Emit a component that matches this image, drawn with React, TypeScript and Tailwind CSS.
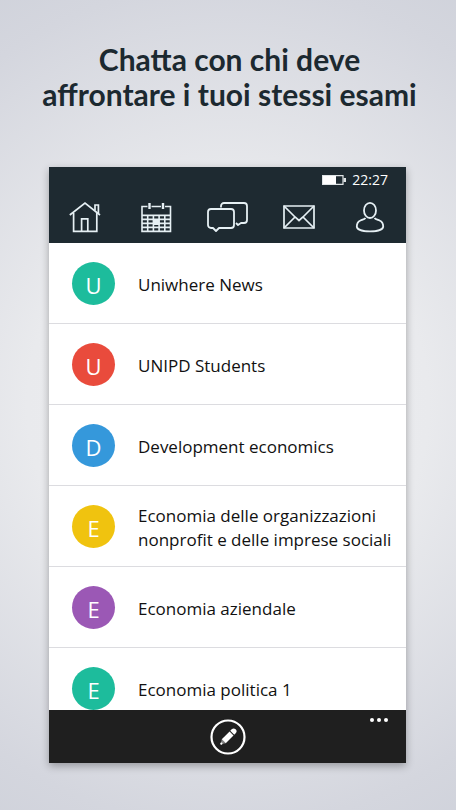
import type { ReactNode } from 'react'

const chats = [
  { name: 'Uniwhere News', color: 'bg-[#1dbc9c]' },
  { name: 'UNIPD Students', color: 'bg-[#e94b3c]' },
  { name: 'Development economics', color: 'bg-[#3598db]' },
  { name: 'Economia delle organizzazioni nonprofit e delle imprese sociali', color: 'bg-[#f0c30f]' },
  { name: 'Economia aziendale', color: 'bg-[#9b58b5]' },
  { name: 'Economia politica 1', color: 'bg-[#1dbc9c]' },
]

function HomeIcon() {
  return (
    <svg width="32" height="32" viewBox="0 0 32 32" fill="none" stroke="currentColor" strokeWidth="1.7">
      <path d="M.8 14 16 2.2 31 14" />
      <path d="M4.6 12v18.3h23.2V12" />
      <path d="M12.6 30V17.8h6.2V30" />
      <path d="M26 9.5V4h3.4v8" />
    </svg>
  )
}

function CalendarIcon() {
  return (
    <svg width="32" height="32" viewBox="0 0 32 32" fill="none" stroke="currentColor" strokeWidth="1.6">
      <path d="M7.5 5.5H2v24.9h28.5V5.5H25M11.5 5.5H21" />
      <path d="M2 14.4h28.5M2 18.4h28.5M2 22.4h28.5M2 26.4h28.5" />
      <path d="M7.7 14.4v16M13.4 14.4v16M19.1 14.4v16M24.8 14.4v16" />
      <path d="M9.5 2v6M23 2v6" strokeWidth="2.4" />
      <path d="M13 18h6.5v6H13z" fill="currentColor" stroke="none" />
    </svg>
  )
}

function ChatIcon() {
  return (
    <svg width="42" height="32" viewBox="0 0 42 32" fill="none" stroke="currentColor" strokeWidth="1.8" strokeLinejoin="round">
      <path d="M5 8h20a3 3 0 0 1 3 3v13a3 3 0 0 1-3 3H13l-3 3-3-3H5a3 3 0 0 1-3-3V11a3 3 0 0 1 3-3z" />
      <path d="M15 6.500V5a3 3 0 0 1 3-3h20a3 3 0 0 1 3 3v14a3 3 0 0 1-3 3h-3l-3 2-2-2" />
    </svg>
  )
}

function MailIcon() {
  return (
    <svg width="32" height="32" viewBox="0 0 32 32" fill="none" stroke="currentColor" strokeWidth="1.7">
      <path d="M1 5h30v22H1z" />
      <path d="m1 5 11 11 4 3.500 4-3.500L31 5" />
      <path d="m1 27 11-11M31 27 20 16" />
    </svg>
  )
}

function PersonIcon() {
  return (
    <svg width="32" height="32" viewBox="0 0 32 32" fill="none" stroke="currentColor" strokeWidth="1.8">
      <ellipse cx="16" cy="9.4" rx="6" ry="7.6" />
      <path d="M11.5 17c-1 1.4-3 1.7-5 2.5C4 20.5 2.8 22 2.8 25.5c0 3.3 6.2 4.9 13.2 4.9s13.2-1.6 13.2-4.9c0-3.500-1.200-5-3.700-6-2-.8-4-1.100-5-2.500" />
    </svg>
  )
}

function PencilIcon() {
  return (
    <svg width="36" height="36" viewBox="0 0 36 36" fill="none">
      <circle cx="18" cy="18" r="16.5" stroke="currentColor" strokeWidth="2.2" />
      <g transform="rotate(-45 18 18)" fill="currentColor">
        <path d="M12 15.2h11v5.6H12z" />
        <path d="M24 15.2h2a2.8 2.8 0 0 1 0 5.6h-2z" />
        <path d="M12 15.2 7.6 18l4.4 2.8z" opacity=".45" />
        <circle cx="8.6" cy="18" r="1.1" />
      </g>
    </svg>
  )
}

function Tab({ label, children }: { label: string; children: ReactNode }) {
  return (
    <button type="button" aria-label={label} className="flex items-center justify-center text-[#e6f0f4]">
      {children}
    </button>
  )
}

export default function App() {
  return (
    <main className="flex h-screen flex-col bg-[radial-gradient(ellipse_110%_65%_at_50%_50%,#efeff2_0%,#e9eaed_40%,#d4d6de_80%,#cdd0d9_100%)] pt-[42px] pr-[50px] pb-[47px] pl-[49px] font-['Open_Sans','Noto_Sans',sans-serif]">
      <h1 className="-mr-5 -ml-4 mb-[55px] text-center font-['Lato',sans-serif] text-[30px] leading-[35px] font-bold text-[#1c2930]">
        Chatta con chi deve
        <br />
        affrontare i tuoi stessi esami
      </h1>

      <section className="flex min-h-0 flex-1 flex-col bg-white shadow-[0_3px_8px_rgba(0,0,0,0.3)]">
        <header className="bg-[#1e2a31] text-white">
          <div className="flex h-[26px] items-center justify-end gap-1.5 pr-[18px]">
            <svg width="24" height="10" viewBox="0 0 24 10" fill="none">
              <path d="M.6.6H21v8.8H.6z" stroke="#dfe4e6" strokeWidth="1.2" />
              <path d="M1 1h13v8H1z" fill="#fff" />
              <path d="M21.5 3H24v4h-2.5z" fill="#dfe4e6" />
            </svg>
            <time className="text-sm leading-5">22:27</time>
          </div>
          <nav className="grid h-[50px] grid-cols-5 pb-0.5">
            <Tab label="Home"><HomeIcon /></Tab>
            <Tab label="Calendario"><CalendarIcon /></Tab>
            <Tab label="Chat"><ChatIcon /></Tab>
            <Tab label="Messaggi"><MailIcon /></Tab>
            <Tab label="Profilo"><PersonIcon /></Tab>
          </nav>
        </header>

        <ul className="min-h-0 flex-1 overflow-hidden">
          {chats.map((chat) => (
            <li key={chat.name} className="border-b border-[#dcdce0]">
              <button type="button" className="flex h-20 w-full items-center gap-[23px] pt-px pr-2 pl-[23px] text-left">
                <span className={`flex size-[43px] shrink-0 items-center justify-center rounded-full pt-0.5 text-[22px] leading-6 text-white ${chat.color}`}>
                  {chat.name[0]}
                </span>
                <span className="pt-0.5 text-[17px] leading-6 text-[#111]">{chat.name}</span>
              </button>
            </li>
          ))}
        </ul>

        <footer className="relative flex h-[53px] shrink-0 items-center justify-center bg-[#1f1f1f] text-white">
          <button type="button" aria-label="Nuovo messaggio">
            <PencilIcon />
          </button>
          <button type="button" aria-label="Altro" className="absolute top-2 right-[18px] flex gap-[3px]">
            <span className="size-1 rounded-full bg-white" />
            <span className="size-1 rounded-full bg-white" />
            <span className="size-1 rounded-full bg-white" />
          </button>
        </footer>
      </section>
    </main>
  )
}
